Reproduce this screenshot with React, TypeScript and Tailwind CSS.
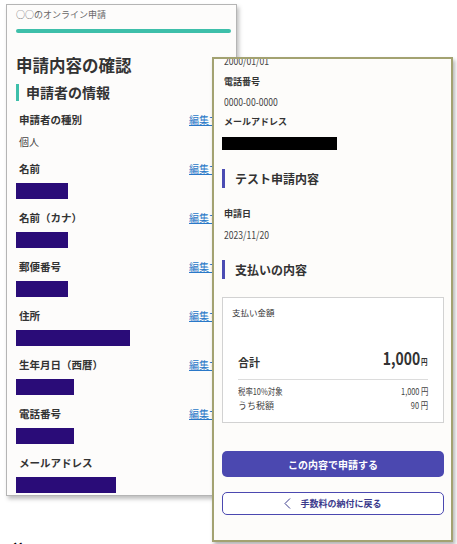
import React from "react";

const jp = { fontFamily: '"Noto Sans CJK JP", "Noto Sans", sans-serif' };

const applicantRows: { label: string; value?: string; block?: number }[] = [
  { label: "申請者の種別", value: "個人" },
  { label: "名前", block: 52 },
  { label: "名前（カナ）", block: 52 },
  { label: "郵便番号", block: 52 },
  { label: "住所", block: 114 },
  { label: "生年月日（西暦）", block: 58 },
  { label: "電話番号", block: 58 },
  { label: "メールアドレス", block: 100 },
];

function Narrow({ children, right }: { children: React.ReactNode; right?: boolean }) {
  return (
    <span className={`inline-block scale-x-[0.82] ${right ? "origin-right" : "origin-left"}`}>
      {children}
    </span>
  );
}

function LeftPanel() {
  return (
    <div className="absolute left-[6px] top-[4px] w-[231px] h-[492px] border border-[#b5b5b5] bg-[#fdfcfb] shadow-[2px_3px_4px_rgba(0,0,0,0.25)] overflow-hidden">
      <div className="pl-[9px] pr-[5px]">
        <div className="mt-[4px] h-[12px] leading-[12px] text-[9px] text-[#666]">○○のオンライン申請</div>
        <div className="mt-[8px] h-[4px] rounded-full bg-[#3ebfaa]" />
        <h1 className="mt-[21px] text-[16.5px] leading-[22px] font-bold text-[#333]">申請内容の確認</h1>
        <div className="mt-[6px] flex items-center h-[20px] gap-[7px]">
          <div className="w-[3px] h-[17px] bg-[#3ebfaa]" />
          <h2 className="text-[14px] leading-[20px] font-bold text-[#333]">申請者の情報</h2>
        </div>

        <div className="mt-[10px] flex flex-col gap-[11px]">
          {applicantRows.map((row) => (
            <div key={row.label}>
              <div className="flex h-[16px] items-center">
                <span className="flex-1 pl-[3px] text-[10.5px] leading-[16px] font-bold text-[#333]">{row.label}</span>
                {row.label !== "メールアドレス" && (
                  <span className="w-[42px] shrink-0 text-[10px] leading-[16px] text-[#2a78c8] underline">編集する</span>
                )}
              </div>
              {row.value ? (
                <div className="mt-[6px] pl-[3px] h-[16px] text-[10px] leading-[16px] text-[#444]">{row.value}</div>
              ) : (
                <div className="mt-[6px] h-[16px] bg-[#2a0c78]" style={{ width: row.block }} />
              )}
            </div>
          ))}
        </div>
      </div>
    </div>
  );
}

function SectionTitle({ children }: { children: React.ReactNode }) {
  return (
    <div className="flex items-center gap-[10px] h-[19px]">
      <div className="w-[3px] h-[19px] bg-[#4b4cb3]" />
      <span className="text-[12px] leading-[18px] font-bold text-[#333]">{children}</span>
    </div>
  );
}

function RightPanel() {
  return (
    <div className="absolute left-[212px] top-[57px] w-[241px] h-[485px] border-2 border-[#a3a271] bg-[#fdfcfa] shadow-[2px_3px_4px_rgba(0,0,0,0.3)] overflow-hidden">
      <div className="pl-[8px] pr-[7px] text-[#333]">
        <div className="-mt-[5px] pl-[2px] h-[14px] text-[10.5px] leading-[14px] text-[#444]">
          <Narrow>2000/01/01</Narrow>
        </div>
        <div className="mt-[7px] pl-[2px] h-[14px] text-[9px] leading-[14px] font-bold">電話番号</div>
        <div className="mt-[6px] pl-[2px] h-[14px] text-[10.5px] leading-[14px] text-[#444]">
          <Narrow>0000-00-0000</Narrow>
        </div>
        <div className="mt-[6px] pl-[2px] h-[14px] text-[9px] leading-[14px] font-bold">メールアドレス</div>
        <div className="mt-[8px] w-[115px] h-[13px] bg-black" />

        <div className="mt-[19px]">
          <SectionTitle>テスト申請内容</SectionTitle>
        </div>
        <div className="mt-[19px] pl-[2px] h-[14px] text-[9px] leading-[14px] font-bold">申請日</div>
        <div className="mt-[7px] pl-[2px] h-[14px] text-[10.5px] leading-[14px] text-[#444]">
          <Narrow>2023/11/20</Narrow>
        </div>

        <div className="mt-[18px]">
          <SectionTitle>支払いの内容</SectionTitle>
        </div>

        <div className="mt-[18px] w-[222px] h-[126px] border border-[#d2d2d2] bg-white">
          <div className="mt-[7px] pl-[9px] h-[14px] text-[8.5px] leading-[14px] text-[#333]">支払い金額</div>
          <div className="mx-[15px]">
            <div className="mt-[33px] flex items-end justify-between h-[20px]">
              <span className="text-[11px] leading-[20px] font-bold">合計</span>
              <span className="leading-[20px] font-bold">
                <Narrow right>
                  <span className="text-[17px]">1,000</span>
                  <span className="text-[8px] ml-[1px]">円</span>
                </Narrow>
              </span>
            </div>
            <div className="mt-[7px] border-t border-[#dcdcdc]" />
            <div className="mt-[5px] flex justify-between h-[14px] text-[9px] leading-[14px] text-[#444]">
              <span>
                <Narrow>税率10%対象</Narrow>
              </span>
              <span>
                <Narrow right>1,000 円</Narrow>
              </span>
            </div>
            <div className="flex justify-between h-[14px] text-[9px] leading-[14px] text-[#444]">
              <span>うち税額</span>
              <span>
                <Narrow right>90 円</Narrow>
              </span>
            </div>
          </div>
        </div>

        <button className="mt-[28px] w-[222px] h-[26px] rounded-[5px] bg-[#4b48b0] text-white text-[10px] font-bold flex items-center justify-center">
          この内容で申請する
        </button>
        <button className="mt-[15px] w-[222px] h-[23px] rounded-[5px] border-[1.5px] border-[#4b48b0] bg-white text-[#3b3a8c] text-[9px] font-bold flex items-center justify-center gap-[9px]">
          <svg width="7" height="11" viewBox="0 0 7 11" fill="none">
            <polyline points="6,0.5 1,5.5 6,10.5" stroke="#3b3a8c" strokeWidth="1" />
          </svg>
          手数料の納付に戻る
        </button>
      </div>
    </div>
  );
}

export default function App() {
  return (
    <div className="relative w-[457px] h-[544px] bg-white overflow-hidden" style={jp}>
      <LeftPanel />
      <RightPanel />
      <span className="absolute left-[11px] top-[539px] text-[22px] leading-[22px] font-bold text-black">“</span>
    </div>
  );
}
